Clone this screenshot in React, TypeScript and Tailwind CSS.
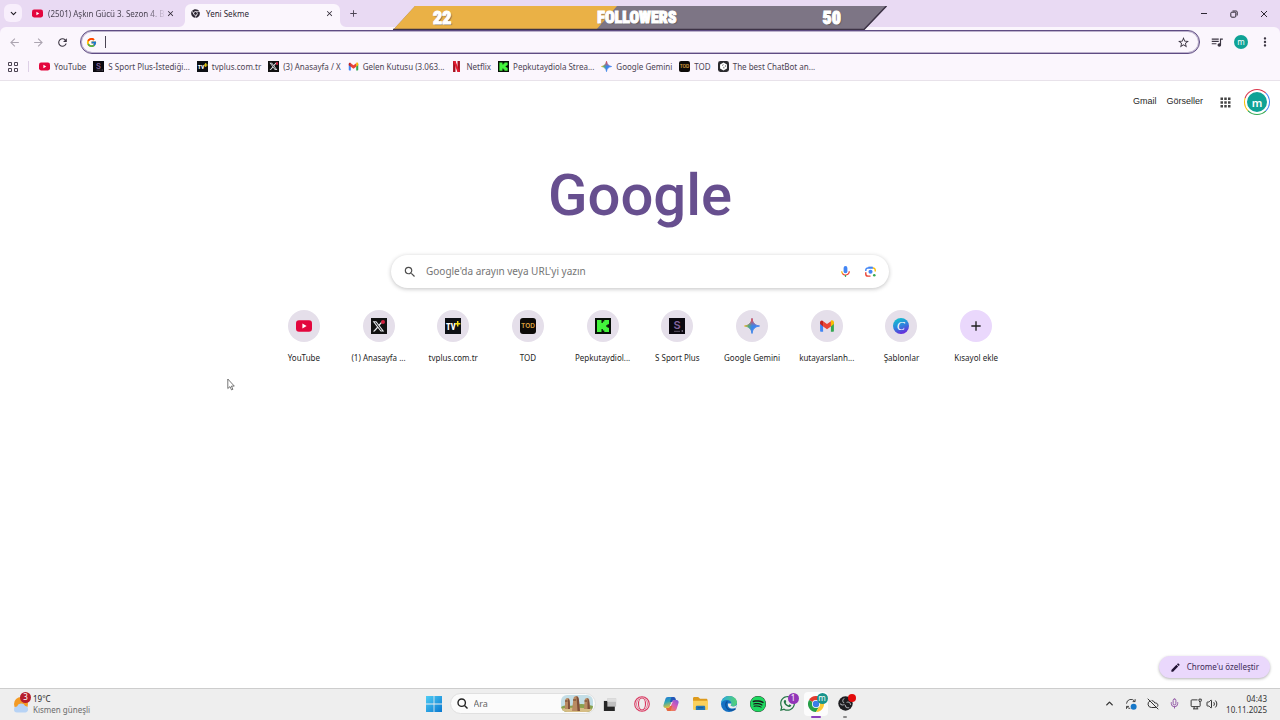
import type { ReactNode } from "react";
import { FcGoogle } from "react-icons/fc";
import { FaWhatsapp, FaSpotify, FaChrome } from "react-icons/fa";
import { FaXTwitter } from "react-icons/fa6";
import {
    MdAdd,
    MdApps,
    MdArrowBack,
    MdArrowForward,
    MdClose,
    MdEdit,
    MdMoreVert,
    MdQueueMusic,
    MdRefresh,
    MdSearch,
    MdStarOutline,
} from "react-icons/md";
import { ChevronDown, ChevronUp, CloudOff, Mic, Volume2 } from "lucide-react";

type IconProps = { className?: string };

/* ---------- site icons ---------- */

const YouTubeIcon = ({ className }: IconProps) => (
    <svg viewBox="0 0 16 16" className={className}>
        <rect y="2.3" width="16" height="11.4" rx="3" fill="#e3063d" />
        <path d="M6.4 5.6v4.8L10.6 8z" fill="#fff" />
    </svg>
);

const XIcon = ({ className }: IconProps) => (
    <span className={`relative flex items-center justify-center bg-[#111] text-gray-200 ${className}`}>
        <FaXTwitter className="w-4/5 h-4/5" />
        <span className="absolute top-[12%] right-[8%] w-1/4 h-1/4 rounded-full bg-[#d0213f]" />
    </span>
);

const TvPlusIcon = ({ className }: IconProps) => (
    <svg viewBox="0 0 16 16" className={className}>
        <rect width="16" height="16" fill="#0d0f14" />
        <text x="1" y="11.500" fontSize="8.500" fontWeight="800" fontFamily="'Roboto Condensed', 'Liberation Sans', sans-serif" fill="#fff">TV</text>
        <path d="M12.700 3v5.600M10 5.800h5.400" stroke="#f7dc13" strokeWidth="1.500" />
    </svg>
);

const TodIcon = ({ className }: IconProps) => (
    <svg viewBox="0 0 16 16" className={className}>
        <rect width="16" height="16" rx="3" fill="#0c0a08" />
        <text x="8" y="10.4" textAnchor="middle" fontSize="6.5" fontWeight="700" fontFamily="Inter, sans-serif" fill="#d59a3c">TOD</text>
    </svg>
);

const KickIcon = ({ className }: IconProps) => (
    <svg viewBox="0 0 16 16" className={className}>
        <rect width="16" height="16" fill="#071007" />
        <path d="M2 2h4.500v3h1.300V3.500H9.300V2h4.700v4.200h-1.500v1.100h-1.300v1.400h1.300v1.100H14V14H9.300v-1.500H7.800V11H6.500v3H2z" fill="#43f43c" />
    </svg>
);

const SportIcon = ({ className }: IconProps) => (
    <svg viewBox="0 0 16 16" className={className}>
        <rect width="16" height="16" fill="#0b080f" />
        <text x="8" y="11" textAnchor="middle" fontSize="11" fontWeight="600" fontFamily="Inter, sans-serif" fill="#8565a0">S</text>
        <path d="M5 13.300h6" stroke="#5d5566" strokeWidth="1" />
        <circle cx="13.300" cy="13" r=".8" fill="#a99bb5" />
    </svg>
);

const GmailIcon = ({ className }: IconProps) => (
    <svg viewBox="0 0 16 16" className={className}>
        <path d="M1.100 4v8.700c0 .6.400 1 1 1h2V6.500z" fill="#4285f4" />
        <path d="M14.900 4v8.700c0 .6-.4 1-1 1h-2V6.500z" fill="#34a853" />
        <path d="M11.900 4v4.400l3-2.300V4.300c0-1.700-1.800-2.500-3-1.500z" fill="#fbbc04" />
        <path d="M4.100 8.400V3.200L8 6.100l3.900-2.900v5.200L8 11.300z" fill="#ea4335" />
        <path d="M1.100 6.100l3 2.300V3c-1.200-1.200-3-.4-3 1.300z" fill="#c5221f" />
    </svg>
);

const NetflixIcon = ({ className }: IconProps) => (
    <svg viewBox="0 0 16 16" className={className}>
        <path d="M3 0h3.500v16H3zM9.500 0H13v16H9.500z" fill="#a5101f" />
        <path d="M3 0h3.500L13 16H9.500z" fill="#e31b2f" />
    </svg>
);

const GeminiIcon = ({ className }: IconProps) => (
    <svg viewBox="0 0 16 16" className={className}>
        <defs>
            <linearGradient id="gemini" x1="0" y1=".45" x2="1" y2=".55">
                <stop offset="0" stopColor="#f2b92f" />
                <stop offset=".25" stopColor="#59ad70" />
                <stop offset=".5" stopColor="#3d85e8" />
                <stop offset="1" stopColor="#4285f4" />
            </linearGradient>
            <linearGradient id="gemini-top" x1="0" y1="0" x2="0" y2="1">
                <stop offset="0" stopColor="#ef4a4f" />
                <stop offset=".5" stopColor="#ef4a4f" stopOpacity="0" />
            </linearGradient>
        </defs>
        <path d="M8 .5C8.600 5 11 7.400 15.500 8 11 8.600 8.600 11 8 15.500 7.400 11 5 8.600.5 8 5 7.400 7.400 5 8 .5z" fill="url(#gemini)" stroke="url(#gemini)" />
        <path d="M8 .5C8.600 5 11 7.400 15.500 8 11 8.600 8.600 11 8 15.500 7.400 11 5 8.600.5 8 5 7.400 7.400 5 8 .5z" fill="url(#gemini-top)" stroke="url(#gemini-top)" />
    </svg>
);

const ChatBotIcon = ({ className }: IconProps) => (
    <svg viewBox="0 0 16 16" className={className}>
        <rect width="16" height="16" rx="3.500" fill="#2a2a2e" />
        <path d="M8 2.200l5 2.900v5.800l-5 2.900-5-2.900V5.100z" fill="#fff" />
        <path d="M6 6.500l2-1.200M8.500 8.500v2.300M10.800 6.300v2" stroke="#2a2a2e" strokeWidth="1" />
    </svg>
);

const CanvaIcon = ({ className }: IconProps) => (
    <svg viewBox="0 0 16 16" className={className}>
        <defs>
            <linearGradient id="canva" x1=".2" y1="0" x2=".6" y2="1">
                <stop offset="0" stopColor="#12c6cc" />
                <stop offset=".5" stopColor="#2c86dc" />
                <stop offset="1" stopColor="#6b28dc" />
            </linearGradient>
        </defs>
        <circle cx="8" cy="8" r="8" fill="url(#canva)" />
        <text x="7.800" y="12" textAnchor="middle" fontSize="12" fontStyle="italic" fontFamily="'Liberation Serif', serif" fill="#fff">C</text>
    </svg>
);

/* ---------- search box icons ---------- */

const VoiceIcon = ({ className }: IconProps) => (
    <svg viewBox="0 0 24 24" className={className}>
        <rect x="8.500" y="2" width="7" height="13" rx="3.500" fill="#4285f4" />
        <path d="M5 11.500c0 2.200.9 4 2.200 5.200" stroke="#f5b400" strokeWidth="2.200" fill="none" />
        <path d="M6.500 15.800A7 7 0 0 0 19 11.500" stroke="#ea4335" strokeWidth="2.200" fill="none" />
        <path d="M12 18.500V22" stroke="#34a853" strokeWidth="2.200" />
    </svg>
);

const LensIcon = ({ className }: IconProps) => (
    <svg viewBox="0 0 24 24" className={className} fill="none" strokeWidth="2.600">
        <path d="M3.300 11V9.500a4 4 0 0 1 4-4h9.400" stroke="#4285f4" />
        <path d="M8 4.300h8" stroke="#4285f4" />
        <path d="M16.500 5.500a4 4 0 0 1 4.200 4V12" stroke="#fbbc04" />
        <path d="M3.300 13.500v3a4 4 0 0 0 4 4H12" stroke="#ea4335" />
        <circle cx="12" cy="12.500" r="3.800" fill="#4285f4" />
        <circle cx="19" cy="19" r="2.400" fill="#34a853" />
    </svg>
);

/* ---------- taskbar icons ---------- */

const WindowsIcon = ({ className }: IconProps) => (
    <svg viewBox="0 0 16 16" className={className}>
        <defs>
            <linearGradient id="win" x1="0" y1="0" x2="1" y2="1">
                <stop offset="0" stopColor="#4fcdf5" />
                <stop offset="1" stopColor="#0878d0" />
            </linearGradient>
        </defs>
        <path d="M0 0h7.600v7.600H0zM8.400 0H16v7.600H8.400zM0 8.400h7.600V16H0zM8.400 8.400H16V16H8.400z" fill="url(#win)" />
    </svg>
);

const StatuesIcon = ({ className }: IconProps) => (
    <svg viewBox="0 0 32 17" className={className}>
        <clipPath id="statues">
            <rect width="32" height="17" rx="6" />
        </clipPath>
        <g clipPath="url(#statues)">
            <rect width="32" height="17" fill="#c4dee6" />
            <path d="M0 12c5-3 9 0 14-2s12-1 18 1v6H0z" fill="#8aa14e" />
            <path d="M0 14c8-2 20-1 32 0v3H0z" fill="#d6bd84" />
            <path d="M4 14V7c0-3 .8-4 2.500-4S9 4 9 7v7zM11 16l1-9c0-4 1-6 3-6s3 2 3 6l1 9zM23 14l.5-7c0-3 .8-4 2.500-4s2.500 1 2.500 4l.5 7z" fill="#b98a62" />
            <path d="M7 3.500c1.500 1 2 3 2 10.500H7zM15.500 1c3 1 2.500 5 3.500 15h-2.500zM26.500 3c1.500 1 2 4 2.500 11h-2.500z" fill="#80503a" />
            <path d="M4 5.500h2.500v1H4zM12 4.500h3v1h-3zM23.500 5.500H26v1h-2.500z" fill="#6a3e28" />
        </g>
    </svg>
);

const TaskViewIcon = ({ className }: IconProps) => (
    <svg viewBox="0 0 16 16" className={className}>
        <rect x="1" y="4.500" width="12.500" height="11.500" fill="#262626" />
        <rect x="5" y="1.500" width="10" height="9.500" fill="#bfbfbf" />
        <path d="M5 1.500h10v4H5z" fill="#dedede" />
    </svg>
);

const OperaIcon = ({ className }: IconProps) => (
    <svg viewBox="0 0 16 16" className={className} fill="none" stroke="#d9365f">
        <circle cx="8" cy="8" r="7.300" strokeWidth="1.100" />
        <ellipse cx="8" cy="8" rx="3.500" ry="6" strokeWidth="1.100" />
        <path d="M5.500 2c-4 3-4 9 0 12M10.500 2c4 3 4 9 0 12" strokeWidth=".6" />
    </svg>
);

const CopilotIcon = ({ className }: IconProps) => (
    <svg viewBox="0 0 16 16" className={className}>
        <defs>
            <linearGradient id="cop-a" x1="0" y1="0" x2=".3" y2="1">
                <stop offset="0" stopColor="#1f72d8" />
                <stop offset=".5" stopColor="#2fa8b5" />
                <stop offset="1" stopColor="#e6c13a" />
            </linearGradient>
            <linearGradient id="cop-b" x1="1" y1="0" x2=".3" y2="1">
                <stop offset="0" stopColor="#7759e2" />
                <stop offset=".5" stopColor="#d45ab8" />
                <stop offset="1" stopColor="#f3824f" />
            </linearGradient>
        </defs>
        <path d="M5 1h6L9 5 7 10c-.5 1.400-1 2-2.500 2h-2C.8 12 0 10.500.5 9l1.800-5.700C2.800 1.800 3.500 1 5 1z" fill="url(#cop-a)" />
        <path d="M11 15H5l2-4 2-5c.5-1.400 1-2 2.500-2h2c1.700 0 2.500 1.500 2 3l-1.800 5.700C13.200 14.200 12.500 15 11 15z" fill="url(#cop-b)" />
        <path d="M8.500 1h2.300c1.100 0 1.500.8 1.800 1.800l.4 1.200h-1.500C10 4 9.500 4.600 9 6H6.800z" fill="#2456b8" />
        <path d="M7.500 15H5.200c-1.100 0-1.500-.8-1.800-1.800L3 12h1.500C6 12 6.500 11.400 7 10h2.200z" fill="#e5673f" />
        <path d="M9 6L7 10h.6l2-4z" fill="#fff" />
    </svg>
);

const FolderIcon = ({ className }: IconProps) => (
    <svg viewBox="0 0 16 16" className={className}>
        <path d="M0 2.500C0 1.600.6 1 1.500 1h4L7.500 3H14c1 0 1.500.6 1.500 1.500V7H0z" fill="#dd9a1c" />
        <path d="M0 5h16v8.500c0 .9-.6 1.500-1.500 1.500h-13C.6 15 0 14.400 0 13.500z" fill="#fad15d" />
        <path d="M3 15v-3c0-1 .6-1.500 1.500-1.500h7c.9 0 1.500.5 1.500 1.500v3z" fill="#2378b9" />
        <path d="M5 12.500h6" stroke="#175a92" />
    </svg>
);

const EdgeIcon = ({ className }: IconProps) => (
    <svg viewBox="0 0 16 16" className={className}>
        <defs>
            <linearGradient id="edge" x1="0" y1="0" x2="1" y2="0">
                <stop offset="0" stopColor="#2aa9e0" />
                <stop offset="1" stopColor="#55d273" />
            </linearGradient>
        </defs>
        <circle cx="8" cy="8" r="8" fill="#1571c4" />
        <path d="M0 8C.2 3.400 3.700 0 8.200 0 12.800 0 16 3.200 16 6.500c0 2.300-1.600 4-4 4-1.500 0-2.300-.6-2.300-1.200 0-.5.6-.8.6-1.900C10.300 5.500 8.600 4 6 4 3 4 .7 5.600 0 8z" fill="url(#edge)" />
        <path d="M6.500 5.500C5 6.300 4.500 8 5 10c.6 2.500 3 4.200 5.600 4.200 1.700 0 3-.5 4-1.400" fill="none" stroke="#0d4f97" strokeWidth="1.200" />
        <path d="M7 7.500c-.6 3 1.500 5 4.500 5 1.500 0 2.800-.4 3.800-1.100l.7-2.900c-1 1.500-2.600 2-4 2-1.500 0-2.300-.6-2.300-1.200 0-.5.6-.8.6-1.900z" fill="#eeeeee" />
    </svg>
);

const ChromeIcon = ({ className }: IconProps) => (
    <svg viewBox="0 0 16 16" className={className}>
        <path d="M8 8L1.070 4A8 8 0 0 1 14.930 4z" fill="#e33b2e" />
        <path d="M8 8L1.070 4A8 8 0 0 0 8 16l3.500-6z" fill="#26a047" />
        <path d="M8 4h6.930A8 8 0 0 1 8 16l3.500-6z" fill="#fcc934" />
        <circle cx="8" cy="8" r="4" fill="#fff" />
        <circle cx="8" cy="8" r="3.200" fill="#3b7de8" />
    </svg>
);

const ObsIcon = ({ className }: IconProps) => (
    <svg viewBox="0 0 16 16" className={className}>
        <circle cx="8" cy="8" r="7.700" fill="#1d1d20" />
        <path d="M8 8C4.500 7.500 4 4 6.800 2.500M8 8c2.200-2.800 5.500-1.200 5.500 1.500M8 8c-1 3.500 1.500 5 4 4.500M8 8c-2 2.500-5 1.500-5.500 0" fill="none" stroke="#a5a5aa" strokeWidth="1.100" />
        <circle cx="8" cy="8" r="1.500" fill="#1d1d20" />
    </svg>
);

const SyncIcon = ({ className }: IconProps) => (
    <svg viewBox="0 0 16 16" className={className} fill="none" stroke="#333" strokeWidth="1.200">
        <path d="M2 7.500a6 6 0 0 1 11-3M13.500 1.500v3.300h-3.300M2 14.500v-3.300h3.300M2.500 11.500A6 6 0 0 0 7 14" />
        <circle cx="11.500" cy="11.500" r="4" fill="#1678c9" stroke="none" />
    </svg>
);

const NetworkIcon = ({ className }: IconProps) => (
    <svg viewBox="0 0 16 16" className={className} fill="none" stroke="#333" strokeWidth="1.300">
        <path d="M10 2.500H2.500a1 1 0 0 0-1 1v7a1 1 0 0 0 1 1h10a1 1 0 0 0 1-1V8M5.500 11.500v3M9.500 11.500v3M4 14.500h7M13.500 5.500V8" />
        <path d="M12 1.500h3V4l-1.500 1.500L12 4z" />
    </svg>
);

/* ---------- data ---------- */

const bookmarks = [
    { label: "YouTube", icon: YouTubeIcon },
    { label: "S Sport Plus-İstediği...", icon: SportIcon },
    { label: "tvplus.com.tr", icon: TvPlusIcon },
    { label: "(3) Anasayfa / X", icon: XIcon },
    { label: "Gelen Kutusu (3.063...", icon: GmailIcon },
    { label: "Netflix", icon: NetflixIcon },
    { label: "Pepkutaydiola Strea...", icon: KickIcon },
    { label: "Google Gemini", icon: GeminiIcon },
    { label: "TOD", icon: TodIcon },
    { label: "The best ChatBot an...", icon: ChatBotIcon },
];

const shortcuts = [
    { label: "YouTube", icon: YouTubeIcon },
    { label: "(1) Anasayfa ...", icon: XIcon },
    { label: "tvplus.com.tr", icon: TvPlusIcon },
    { label: "TOD", icon: TodIcon },
    { label: "Pepkutaydiol...", icon: KickIcon },
    { label: "S Sport Plus", icon: SportIcon },
    { label: "Google Gemini", icon: GeminiIcon },
    { label: "kutayarslanh...", icon: GmailIcon },
    { label: "Şablonlar", icon: CanvaIcon },
];

/* ---------- browser frame ---------- */

const TabStrip = () => (
    <div className="flex items-end h-[27px] bg-[#e9daf3] text-[#4b4453]">
        <button aria-label="Sekmelerde ara" className="flex items-center justify-center w-[18px] h-[18px] ml-1 mb-[5px] rounded-md bg-[#f8effc] text-[#1f1a24]">
            <ChevronDown size={9} strokeWidth={3} />
        </button>
        <div className="flex items-center w-[163px] h-[23px] px-[10px] pb-1 text-[8px]">
            <YouTubeIcon className="w-[11px] h-[11px] mr-[5px] shrink-0" />
            <span className="flex-1 whitespace-nowrap mask-r-from-85%">(2501) Aşkın Gücü 3. Sezon 4. B</span>
            <button aria-label="Sekmeyi kapat" className="text-[#2d2733]"><MdClose size={9} /></button>
        </div>
        <div className="relative flex items-center w-[155px] h-[23px] px-[6px] pb-1 rounded-t-md bg-[#fbf6fd] text-[8px] text-[#2d2733]">
            <svg viewBox="0 0 6 6" className="absolute bottom-0 -left-[6px] w-[6px] h-[6px]"><path d="M6 0v6H0a6 6 0 0 0 6-6z" fill="#fbf6fd" /></svg>
            <svg viewBox="0 0 6 6" className="absolute bottom-0 -right-[6px] w-[6px] h-[6px]"><path d="M0 0v6h6a6 6 0 0 1-6-6z" fill="#fbf6fd" /></svg>
            <FaChrome size={9} className="mr-[6px]" />
            <span className="flex-1">Yeni Sekme</span>
            <button aria-label="Sekmeyi kapat"><MdClose size={9} /></button>
        </div>
        <button aria-label="Yeni sekme" className="ml-2 mb-[8px]"><MdAdd size={11} /></button>
        <div className="flex items-center gap-[22px] ml-auto mr-3 h-full text-[#2d2733]">
            <button aria-label="Simge durumuna küçült">
                <svg viewBox="0 0 8 8" className="w-2 h-2" stroke="currentColor"><path d="M1 3.500h6" /></svg>
            </button>
            <button aria-label="Geri yükle">
                <svg viewBox="0 0 8 8" className="w-2 h-2" fill="none" stroke="currentColor"><rect x=".8" y="2.200" width="5" height="5" rx="1" /><path d="M2.500 1h3.700c.6 0 1 .4 1 1v3.500" /></svg>
            </button>
            <button aria-label="Kapat">
                <svg viewBox="0 0 8 8" className="w-2 h-2" stroke="currentColor"><path d="M1 1l6 6M7 1L1 7" /></svg>
            </button>
        </div>
    </div>
);

const Toolbar = () => (
    <div className="bg-[#e9daf3]">
        <div className="flex items-center h-[30px] px-2 rounded-t-md bg-[#fbf6fd] text-[#3b3542]">
            <button aria-label="Geri" className="mr-[11px] text-[#aca5b1]"><MdArrowBack size={13} /></button>
            <button aria-label="İleri" className="mr-[11px] text-[#aca5b1]"><MdArrowForward size={13} /></button>
            <button aria-label="Yenile" className="mr-[11px]"><MdRefresh size={13} /></button>
            <div className="flex flex-1 items-center h-6 pl-[5px] pr-[9px] border border-[#5f4c83] ring-1 ring-inset ring-[#5f4c83]/40 rounded-full">
                <FcGoogle size={11} />
                <span className="w-px h-3 ml-2 bg-[#4b4453]" />
                <input aria-label="Adres ve arama çubuğu" className="flex-1 h-full ml-1 bg-transparent text-[10px] outline-none" />
                <button aria-label="Yer işareti ekle"><MdStarOutline size={13} /></button>
            </div>
            <button aria-label="Medya" className="ml-[10px]"><MdQueueMusic size={14} /></button>
            <button aria-label="Profil" className="flex items-center justify-center w-[14px] h-[14px] ml-[10px] rounded-full bg-[#0fa296] text-[8px] leading-none text-white">m</button>
            <button aria-label="Menü" className="ml-[10px]"><MdMoreVert size={14} /></button>
        </div>
    </div>
);

const BookmarksBar = () => (
    <nav className="flex items-center h-6 pl-2 pb-1 bg-[#fbf6fd] border-b border-[#e8e2ea] text-[8px] text-[#4b4453] whitespace-nowrap">
        <button aria-label="Sekme grupları">
            <svg viewBox="0 0 10 10" className="w-[10px] h-[10px]" fill="none" stroke="currentColor">
                <path d="M.5.500h3v3h-3zM6.500.500h3v3h-3zM.5 6.500h3v3h-3zM6.500 6.500h3v3h-3z" />
            </svg>
        </button>
        <span className="w-px h-[11px] mx-[10px] bg-[#ddd0e6]" />
        <div className="flex items-center gap-[7px]">
            {bookmarks.map(({ label, icon: Icon }) => (
                <a key={label} href="#" className="flex items-center gap-1">
                    <Icon className="w-[11px] h-[11px]" />
                    {label}
                </a>
            ))}
        </div>
    </nav>
);

const FollowersBanner = () => (
    <div className="absolute top-[6px] left-1/2 -translate-x-1/2 w-[494px] h-6">
        <svg viewBox="0 0 494 24" className="absolute inset-0 w-full h-full">
            <path d="M22 0h472l-23 24H0z" fill="#7d7585" />
            <path d="M22 0h202l-21 24H0z" fill="#eab146" />
            <path d="M0 23.500h471L493.500 0" fill="none" stroke="#3d3346" strokeWidth="1.500" />
        </svg>
        <div className="relative flex items-center justify-between h-full pl-[40px] pr-[46px] font-['Impact','Roboto_Condensed','Open_Sans_Condensed','Liberation_Sans',sans-serif] font-black text-[18px] leading-none text-white [-webkit-text-stroke:1px_white] text-shadow-[1px_1px_1px_#555]">
            <span>22</span>
            <span className="text-[16px]">FOLLOWERS</span>
            <span>50</span>
        </div>
    </div>
);

/* ---------- new tab page ---------- */

const Shortcut = ({ label, tone = "bg-[#e5dfea]", children }: { label: string; tone?: string; children: ReactNode }) => (
    <a href="#" className="flex flex-col items-center gap-[10px] text-[8px] leading-3 text-[#1f1f1f] whitespace-nowrap">
        <span className={`flex items-center justify-center w-8 h-8 rounded-full ${tone}`}>{children}</span>
        {label}
    </a>
);

const NewTab = () => (
    <main className="flex flex-1 flex-col items-center">
        <div className="flex self-stretch items-center justify-end h-[42px] pr-[10px] font-['Liberation_Sans',sans-serif] text-[9px] text-[#1f1f1f]">
            <a href="#" className="mr-[10px]">Gmail</a>
            <a href="#" className="mr-[15px]">Görseller</a>
            <button aria-label="Google uygulamaları" className="mr-[11px] text-[#444]"><MdApps size={15} /></button>
            <button aria-label="Google hesabı" className="flex items-center justify-center w-[26px] h-[26px] rounded-full bg-[conic-gradient(#d9344a_0_12%,#4285f4_12%_38%,#34a853_38%_63%,#fbbc04_63%_80%,#d9344a_80%)]">
                <span className="flex items-center justify-center w-6 h-6 rounded-full bg-[#0fa296] border-2 border-white font-['Noto_Sans',sans-serif] text-[11px] leading-none font-semibold text-white">m</span>
            </button>
        </div>
        <h1 className="h-[132px] pt-9 font-['Roboto',sans-serif] font-medium text-[58px] leading-[72px] text-[#674f8f]">Google</h1>
        <label className="flex items-center w-[498px] max-w-full h-[33px] px-3 rounded-full bg-white shadow-[0_1px_4px_rgba(32,33,36,0.28)]">
            <MdSearch size={14} className="text-[#4d4d4d]" />
            <input type="search" aria-label="Google'da ara" placeholder="Google'da arayın veya URL'yi yazın" className="flex-1 ml-[9px] text-[10px] outline-none placeholder:text-[#757575]" />
            <button aria-label="Sesli arama"><VoiceIcon className="w-[13px] h-[13px]" /></button>
            <button aria-label="Görsel arama" className="ml-3"><LensIcon className="w-[13px] h-[13px]" /></button>
        </label>
        <div className="grid grid-cols-10 w-[747px] max-w-full mt-[22px]">
            {shortcuts.map(({ label, icon: Icon }) => (
                <Shortcut key={label} label={label}><Icon className="w-4 h-4" /></Shortcut>
            ))}
            <Shortcut label="Kısayol ekle" tone="bg-[#ead8fc]"><MdAdd size={16} /></Shortcut>
        </div>
        <button className="flex self-end items-center gap-[6px] h-[22px] px-[11px] mt-auto mr-[10px] mb-[10px] rounded-full bg-[#ead8fc] text-[8px] text-[#3b2a55] shadow-[0_1px_3px_rgba(0,0,0,0.3)]">
            <MdEdit size={11} className="text-[#221335]" />
            Chrome'u özelleştir
        </button>
    </main>
);

/* ---------- taskbar ---------- */

const TaskButton = ({ label, active, badge, children }: { label: string; active?: boolean; badge?: ReactNode; children: ReactNode }) => (
    <button aria-label={label} className="relative flex items-center justify-center w-[29px] h-7">
        <span className={`flex items-center justify-center w-6 h-6 rounded-sm ${active ? "bg-white/80" : ""}`}>{children}</span>
        {badge}
    </button>
);

const Taskbar = () => (
    <footer className="grid grid-cols-[1fr_auto_1fr] items-center h-8 pb-[2px] bg-[#eeeeee] border-t border-[#cdcdcd] text-[8px] leading-[11px] text-[#262626]">
        <div className="flex items-center gap-1 pl-[13px]">
            <div className="relative w-4 h-5">
                <svg viewBox="0 0 16 20" className="w-4 h-5">
                    <circle cx="8" cy="10" r="7" fill="#f39a25" />
                    <path d="M4 18.500a3 3 0 0 1 0-6 4.500 4.500 0 0 1 8.200-.5 3.300 3.300 0 0 1 .3 6.500z" fill="#b7d3f5" />
                </svg>
                <span className="absolute -top-[2px] left-[7px] flex items-center justify-center w-[11px] h-[11px] rounded-full bg-[#b71c2b] text-[8px] leading-none text-white">3</span>
            </div>
            <div>
                <div>19°C</div>
                <div className="text-[#6b6b6b]">Kısmen güneşli</div>
            </div>
        </div>

        <div className="flex items-center pl-[5px]">
            <button aria-label="Başlat" className="mr-2"><WindowsIcon className="w-4 h-4" /></button>
            <label className="flex items-center w-[146px] h-[21px] px-[6px] pr-[2px] rounded-full bg-[#fbfbfb] border border-[#e0e0e0]">
                <svg viewBox="0 0 11 11" className="w-[11px] h-[11px] shrink-0" fill="none" stroke="#222" strokeWidth="1.400"><circle cx="4.700" cy="4.700" r="3.700" /><path d="M7.500 7.500l3 3" /></svg>
                <input aria-label="Ara" placeholder="Ara" className="flex-1 min-w-0 ml-[6px] text-[9px] outline-none placeholder:text-[#666]" />
                <StatuesIcon className="w-8 h-[17px]" />
            </label>
            <TaskButton label="Görev görünümü"><TaskViewIcon className="w-[14px] h-[14px]" /></TaskButton>
            <div className="flex items-center ml-[3px]">
                <TaskButton label="Opera"><OperaIcon className="w-4 h-4" /></TaskButton>
                <TaskButton label="Copilot"><CopilotIcon className="w-4 h-4" /></TaskButton>
                <TaskButton label="Dosya Gezgini"><FolderIcon className="w-[17px] h-[15px]" /></TaskButton>
                <TaskButton label="Edge"><EdgeIcon className="w-4 h-4" /></TaskButton>
                <TaskButton label="Spotify"><FaSpotify size={16} className="rounded-full bg-[#191919] text-[#1ed760]" /></TaskButton>
                <TaskButton
                    label="WhatsApp"
                    badge={<span className="absolute top-[3px] right-[3px] flex items-center justify-center w-[11px] h-[11px] rounded-full bg-[#9235b8] text-[8px] leading-none text-white">1</span>}
                >
                    <FaWhatsapp size={17} className="text-[#257747]" />
                </TaskButton>
                <TaskButton
                    label="Chrome"
                    active
                    badge={
                        <>
                            <span className="absolute top-[3px] right-[3px] flex items-center justify-center w-[11px] h-[11px] rounded-full bg-[#18948c] text-[8px] leading-none text-white">m</span>
                            <span className="absolute bottom-0 w-[10px] h-[2px] rounded-full bg-[#8d3fbd]" />
                        </>
                    }
                >
                    <ChromeIcon className="w-4 h-4" />
                </TaskButton>
                <TaskButton
                    label="OBS"
                    badge={
                        <>
                            <span className="absolute top-1 right-1 w-2 h-2 rounded-full bg-[#e30b0b]" />
                            <span className="absolute bottom-0 w-1 h-[2px] rounded-full bg-[#8a8a8a]" />
                        </>
                    }
                >
                    <ObsIcon className="w-[15px] h-[15px]" />
                </TaskButton>
            </div>
        </div>

        <div className="flex items-center justify-end gap-2 pr-[13px] text-[#333]">
            <div className="flex items-center gap-[10px]">
                <ChevronUp size={11} strokeWidth={3} />
                <SyncIcon className="w-3 h-3" />
                <CloudOff size={12} strokeWidth={2} />
                <Mic size={11} strokeWidth={2} className="text-[#8a4ba0]" />
                <div className="flex items-center gap-1">
                    <NetworkIcon className="w-3 h-3" />
                    <Volume2 size={12} strokeWidth={2} />
                </div>
            </div>
            <div className="text-right">
                <div>04:43</div>
                <div>10.11.2025</div>
            </div>
        </div>
    </footer>
);

const Cursor = () => (
    <svg viewBox="0 0 8 13" className="absolute top-[378px] left-[227px] w-2 h-[13px]">
        <path d="M.8 1v9.500L3 8.600l1.500 3.300 1.400-.6-1.500-3.200h2.900z" fill="#fff" stroke="#555" strokeWidth=".8" />
    </svg>
);

export default function App() {
    return (
        <div className="relative flex flex-col min-h-screen bg-white font-['Noto_Sans','Open_Sans',sans-serif]">
            <header>
                <TabStrip />
                <Toolbar />
                <BookmarksBar />
            </header>
            <NewTab />
            <Taskbar />
            <FollowersBanner />
            <Cursor />
        </div>
    );
}
